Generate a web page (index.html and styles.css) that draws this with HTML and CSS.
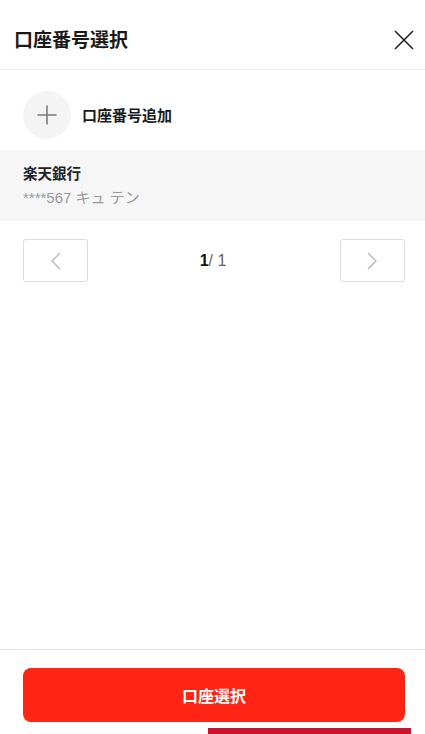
FILE: index.html
```html
<!DOCTYPE html>
<html lang="ja">
<head>
<meta charset="utf-8">
<title>口座番号選択</title>
<link rel="stylesheet" href="styles.css">
</head>
<body>
<div class="page">
  <header class="header">
    <h1 class="title">口座番号選択</h1>
    <button class="close" aria-label="閉じる">
      <svg width="20" height="20" viewBox="0 0 20 20"><path d="M1 1L19 19M19 1L1 19" stroke="#222" stroke-width="1.6" fill="none"/></svg>
    </button>
  </header>
  <main class="main">
    <div class="add-row">
      <span class="add-circle">
        <svg width="20" height="20" viewBox="0 0 20 20"><path d="M10 0.5V19.5M0.5 10H19.5" stroke="#7a7a7a" stroke-width="1.6" fill="none"/></svg>
      </span>
      <span class="add-label">口座番号追加</span>
    </div>
    <div class="account selected">
      <div class="bank">楽天銀行</div>
      <div class="acct-no">****567 キュ テン</div>
    </div>
    <div class="pager">
      <button class="pg-btn" aria-label="前へ">
        <svg width="12" height="18" viewBox="0 0 12 18"><path d="M10 1L2 9L10 17" stroke="#b5b5b5" stroke-width="1.3" fill="none"/></svg>
      </button>
      <div class="pg-count"><b>1</b>/ 1</div>
      <button class="pg-btn" aria-label="次へ">
        <svg width="12" height="18" viewBox="0 0 12 18"><path d="M2 1L10 9L2 17" stroke="#b5b5b5" stroke-width="1.3" fill="none"/></svg>
      </button>
    </div>
  </main>
  <footer class="footer">
    <button class="submit">口座選択</button>
  </footer>
  <div class="bottom-strip"></div>
</div>
</body>
</html>
```
FILE: styles.css
```css
* { box-sizing: border-box; }
html, body { margin: 0; padding: 0; }
body {
  font-family: "Noto Sans CJK JP", "Noto Sans", sans-serif;
  color: #222;
  background: #fff;
}
.page {
  position: relative;
  height: 734px;
  display: flex;
  flex-direction: column;
  overflow: hidden;
}
.header {
  height: 70px;
  border-bottom: 1px solid #ececec;
  display: flex;
  align-items: center;
  justify-content: space-between;
  padding: 0 11px 0 14px;
}
.title {
  margin: 0;
  font-size: 19px;
  font-weight: 700;
  line-height: 1;
  color: #1a1a1a;
  padding-top: 8px;
}
.close {
  border: 0;
  background: none;
  padding: 0;
  width: 20px;
  height: 20px;
  margin-top: 10px;
  display: flex;
}
.main { flex: 1; }
.add-row {
  height: 80px;
  display: flex;
  align-items: center;
  padding: 9px 23px 0;
  gap: 11px;
}
.add-circle {
  width: 48px;
  height: 48px;
  border-radius: 50%;
  background: #f4f4f4;
  display: flex;
  align-items: center;
  justify-content: center;
}
.add-label {
  font-size: 15px;
  font-weight: 700;
  color: #1a1a1a;
}
.account {
  height: 71px;
  padding: 12px 23px 0;
}
.account.selected { background: #f6f6f7; }
.bank {
  font-size: 14.5px;
  font-weight: 700;
  line-height: 22px;
  color: #222;
}
.acct-no {
  font-family: "Liberation Sans", "Noto Sans CJK JP", sans-serif;
  font-size: 15px;
  line-height: 27px;
  color: #999;
}
.pager {
  margin-top: 18px;
  padding: 0 20px 0 23px;
  display: flex;
  align-items: center;
  justify-content: space-between;
}
.pg-btn {
  width: 65px;
  height: 43px;
  border: 1px solid #dcdcdc;
  border-radius: 3px;
  background: #fff;
  display: flex;
  align-items: center;
  justify-content: center;
  padding: 0;
}
.pg-count {
  font-family: "Liberation Sans", "Noto Sans CJK JP", sans-serif;
  font-size: 16px;
  color: #666;
  padding-right: 2px;
}
.pg-count b { color: #111; font-weight: 700; }
.footer {
  border-top: 1px solid #e8e8e8;
  padding: 18px 20px 12px 23px;
}
.submit {
  width: 100%;
  height: 54px;
  border: 0;
  border-radius: 8px;
  background: #ff2414;
  color: #fff;
  font-family: inherit;
  font-size: 16px;
  font-weight: 700;
}
.bottom-strip {
  position: absolute;
  left: 208px;
  bottom: 0;
  width: 203px;
  height: 6px;
  background: #c8152d;
}
```
